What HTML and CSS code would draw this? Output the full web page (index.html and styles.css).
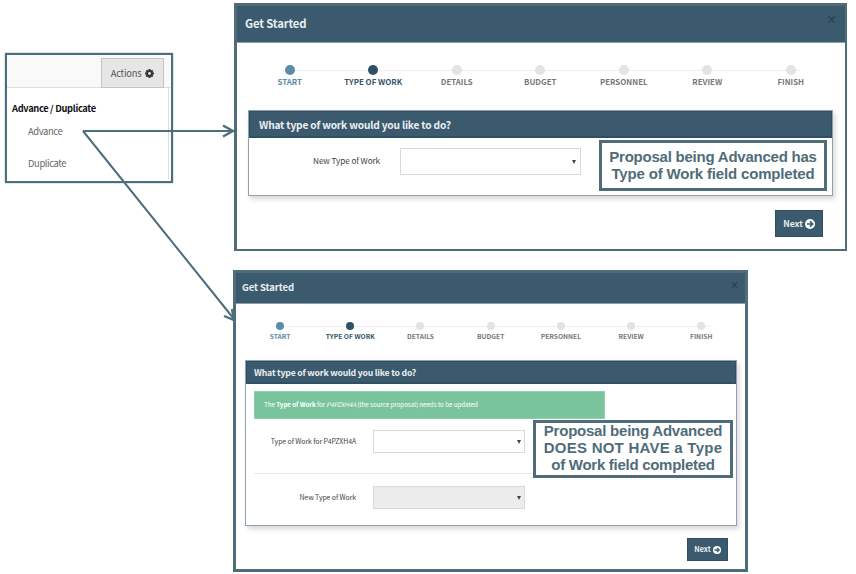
FILE: index.html
```html
<!DOCTYPE html>
<html lang="en">
<head>
<meta charset="utf-8">
<title>Get Started</title>
<link rel="stylesheet" href="styles.css">
</head>
<body>
<div class="board">
  <section class="menu">
    <div class="menu-bar">
      <button class="actions"><span>Actions</span>
        <svg class="gear" viewBox="0 0 16 16"><g stroke="#333" stroke-width="3.6"><path d="M8 0v16M0 8h16M2.4 2.4l11.2 11.2M13.6 2.4L2.4 13.6"/></g><circle cx="8" cy="8" r="6" fill="#333"/><circle cx="8" cy="8" r="2.5" fill="#e6e6e6"/></svg>
      </button>
    </div>
    <div class="menu-list">
      <h2><span>Advance / Duplicate</span></h2>
      <a class="item">Advance</a>
      <a class="item">Duplicate</a>
    </div>
  </section>
  <main class="dialogs">
    <section class="dialog large">
      <header class="title"><h1>Get Started</h1><span class="close">×</span></header>
      <ol class="steps">
        <li class="done"><i></i><span>START</span></li>
        <li class="current"><i></i><span>TYPE OF WORK</span></li>
        <li><i></i><span>DETAILS</span></li>
        <li><i></i><span>BUDGET</span></li>
        <li><i></i><span>PERSONNEL</span></li>
        <li><i></i><span>REVIEW</span></li>
        <li><i></i><span>FINISH</span></li>
      </ol>
      <div class="card">
        <h2><span>What type of work would you like to do?</span></h2>
        <div class="row"><label><span>New Type of Work</span></label><div class="select"><b></b></div></div>
        <div class="callout"><span class="c1">Proposal being Advanced has</span><span class="c2">Type of Work field completed</span></div>
      </div>
      <button class="next"><span>Next</span><svg viewBox="0 0 16 16"><circle cx="8" cy="8" r="8" fill="#fff"/><path d="M3 8h9M8 3.700L12.300 8 8 12.300" fill="none" stroke="#3b5a6d" stroke-width="2.600"/></svg></button>
    </section>
    <section class="dialog small">
      <header class="title"><h1>Get Started</h1><span class="close">×</span></header>
      <ol class="steps">
        <li class="done"><i></i><span>START</span></li>
        <li class="current"><i></i><span>TYPE OF WORK</span></li>
        <li><i></i><span>DETAILS</span></li>
        <li><i></i><span>BUDGET</span></li>
        <li><i></i><span>PERSONNEL</span></li>
        <li><i></i><span>REVIEW</span></li>
        <li><i></i><span>FINISH</span></li>
      </ol>
      <div class="card">
        <h2><span>What type of work would you like to do?</span></h2>
        <p class="alert"><span>The <strong>Type of Work</strong> for <em>P4PZXH4A</em> (the source proposal) needs to be updated</span></p>
        <div class="row"><label><span>Type of Work for P4PZXH4A</span></label><div class="select"><b></b></div></div>
        <hr>
        <div class="row"><label><span>New Type of Work</span></label><div class="select off"><b></b></div></div>
        <div class="callout"><span class="c1">Proposal being Advanced</span><span class="c3">DOES NOT HAVE a Type</span><span class="c4">of Work field completed</span></div>
      </div>
      <button class="next"><span>Next</span><svg viewBox="0 0 16 16"><circle cx="8" cy="8" r="8" fill="#fff"/><path d="M3 8h9M8 3.700L12.300 8 8 12.300" fill="none" stroke="#3b5a6d" stroke-width="2.600"/></svg></button>
    </section>
  </main>
  <svg class="arrows" viewBox="0 0 856 574" fill="none" stroke="#4d6e7c" stroke-width="2">
    <path d="M83 131H233M83 131L234 319"/>
    <path d="M223 125.500L233 131L223 136.500M224 316L234 320L232 309" stroke-width="2.400"/>
  </svg>
</div>
</body>
</html>
```
FILE: styles.css
```css
* { box-sizing: border-box; }
body {
  margin: 0;
  background: #fff;
  font-family: "Noto Sans CJK SC", "Open Sans", sans-serif;
  color: #555;
}
h1, h2, p, ol { margin: 0; padding: 0; }
span { white-space: nowrap; }
button { font-family: inherit; padding: 0; }
.board {
  position: relative;
  display: flex;
  align-items: flex-start;
  width: 856px;
  height: 574px;
  overflow: hidden;
}
.arrows { position: absolute; left: 0; top: 0; width: 856px; height: 574px; }

.menu {
  flex: none;
  width: 168px;
  height: 130px;
  margin: 53px 0 0 5px;
  border: 2px solid #4d6e7c;
  box-shadow: 0 0 1px #4d6e7c;
}
.menu-bar {
  display: flex;
  justify-content: flex-end;
  height: 33px;
  padding: 3px 7px 0 0;
  background: #f9f9f9;
  border-bottom: 1px solid #ddd;
}
.actions {
  display: flex;
  align-items: center;
  justify-content: center;
  gap: 4px;
  width: 63px;
  height: 30px;
  background: #e6e6e6;
  border: 1px solid #c4c4c4;
  font-size: 9.400px;
  letter-spacing: -.25px;
  color: #555;
}
.actions span { margin-top: -1px; }
.gear { width: 9px; height: 9px; }
.menu-list {
  width: 162px;
  height: 91px;
  padding: 12px 0 0 5px;
  border-right: 1px solid #ddd;
}
.menu-list h2 { font-size: 9.300px; letter-spacing: -.32px; line-height: 17px; color: #111; }
.item {
  display: block;
  padding-left: 16px;
  font-size: 9.400px;
  letter-spacing: -.38px;
  line-height: 16px;
  margin-top: 6px;
  color: #666;
}
.item + .item { margin-top: 16px; }

.dialogs { display: flex; flex-direction: column; margin: 3px 0 0 60px; gap: 19px; }
.dialog { display: flex; flex-direction: column; background: #fff; }
.large {
  width: 613px;
  height: 248px;
  margin-left: 1px;
  border: solid #4f6d79;
  border-width: 3px 2px 2px 3px;
}
.small { width: 515px; height: 302px; border: 3px solid #4f6d79; }

.title {
  flex: none;
  display: flex;
  justify-content: space-between;
  background: #3b5a6d;
  border-bottom: 1px solid #8ba0ad;
  color: #e9eef1;
}
.title h1 { font-weight: 700; white-space: nowrap; }
.close { color: #263f4d; font-weight: 700; }
.large .title { height: 37px; padding: 0 8px; }
.large h1 { font-size: 11.300px; letter-spacing: -.15px; line-height: 34px; }
.large .close { font-size: 11px; line-height: 27px; }
.small .title { height: 31px; padding: 0 6px; }
.small h1 { font-size: 9.500px; letter-spacing: -.1px; line-height: 28px; }
.small .close { font-size: 9px; line-height: 23px; }

.steps {
  flex: none;
  display: grid;
  grid-template-columns: repeat(7, 1fr);
  list-style: none;
  background: linear-gradient(#efefef, #efefef) no-repeat;
}
.steps li {
  display: flex;
  flex-direction: column;
  align-items: center;
  font-weight: 700;
  color: #777;
}
.steps i { background: #e3e3e3; border-radius: 50%; }
.steps .done { color: #5b8ba7; }
.steps .done i { background: #5b8ba7; }
.steps .current { color: #34566a; }
.steps .current i { background: #2f5165; }
.large .steps { width: 584.500px; height: 66px; margin-left: 11px; padding-top: 22px; background-size: 519px 1px; background-position: 33px 27px; }
.large .steps i { width: 10px; height: 10px; }
.large .steps span { font-size: 7.900px; line-height: 13px; }
.small .steps { width: 491.400px; height: 56px; margin-left: 9px; padding-top: 18px; background-size: 438px 1px; background-position: 27px 22px; }
.small .steps i { width: 8px; height: 8px; }
.small .steps span { font-size: 6.700px; line-height: 12px; }

.card {
  position: relative;
  flex: none;
  border: 1px solid #8fa2ae;
  box-shadow: 2px 3px 5px rgba(0, 0, 0, .16);
}
.card h2 {
  background: #3b5a6d;
  border: solid #2f4f63;
  border-width: 1px 1px 2px;
  color: #e9eef1;
  font-weight: 700;
}
.large .card { width: 585px; height: 86px; margin: 1px 0 0 11px; }
.large .card h2 { height: 27px; padding-left: 9px; font-size: 10.200px; letter-spacing: -.19px; line-height: 25px; }
.small .card { width: 492px; height: 166px; margin: 0 0 0 9px; }
.small .card h2 { height: 23px; padding-left: 7px; font-size: 8.700px; letter-spacing: -.2px; line-height: 21px; }
.row { display: flex; align-items: center; }
.row label { flex: none; display: flex; justify-content: flex-end; color: #444; }
.select {
  display: flex;
  align-items: center;
  justify-content: flex-end;
  background: #fff;
  border: 1px solid #d9d9d9;
}
.select b {
  border: 2px solid transparent;
  border-top: 4px solid #444;
  border-bottom: 0;
}
.off { background: #ececec; }
.large .row { margin-top: 10px; }
.large label { width: 131px; margin-right: 20px; padding-bottom: 3px; font-size: 8.200px; letter-spacing: -.1px; line-height: 24px; }
.large .select { width: 181px; height: 27px; padding-right: 4px; }
.small label { width: 110px; margin-right: 17px; padding-bottom: 2px; font-size: 6.900px; letter-spacing: -.07px; line-height: 20px; }
.small .select { width: 152px; height: 23px; padding-right: 3px; }
.alert {
  width: 351px;
  height: 28px;
  margin: 7px 0 11px 8px;
  padding-left: 9px;
  background: #79c49d;
  border: 1px solid #8fceab;
  color: #fff;
  font-size: 6.300px;
  letter-spacing: -.08px;
  line-height: 26px;
}
hr { margin: 20px 8px 12px; border: 0; border-top: 1px solid #e6e6e6; }

.callout {
  position: absolute;
  display: flex;
  flex-direction: column;
  align-items: center;
  justify-content: center;
  background: #fff;
  border: 3px solid #4f6d79;
  color: #4f6d79;
  font: 700 15px/17px "Liberation Sans", Arial, sans-serif;
}
.callout span { letter-spacing: -.23px; }
.callout .c2 { letter-spacing: -.17px; }
.callout .c3 { letter-spacing: .24px; }
.callout .c4 { letter-spacing: -.28px; }
.large .callout { left: 350px; top: 29px; width: 228px; height: 51px; padding-bottom: 2px; }
.small .callout { left: 287px; top: 59px; width: 200px; height: 58px; padding-bottom: 3px; }

.next {
  display: flex;
  align-items: center;
  justify-content: center;
  align-self: flex-end;
  gap: 2px;
  background: #3b5a6d;
  border: 1px solid #2f4f63;
  color: #e9eef1;
  font-weight: 700;
}
.large .next { width: 48px; height: 27px; margin: 14px 22px 0 0; font-size: 8.700px; }
.large .next svg { width: 10px; height: 10px; }
.small .next { width: 41px; height: 23px; margin: 12px 17px 0 0; font-size: 7.300px; }
.small .next svg { width: 8px; height: 8px; }
.next span { margin-top: -1px; }
```
